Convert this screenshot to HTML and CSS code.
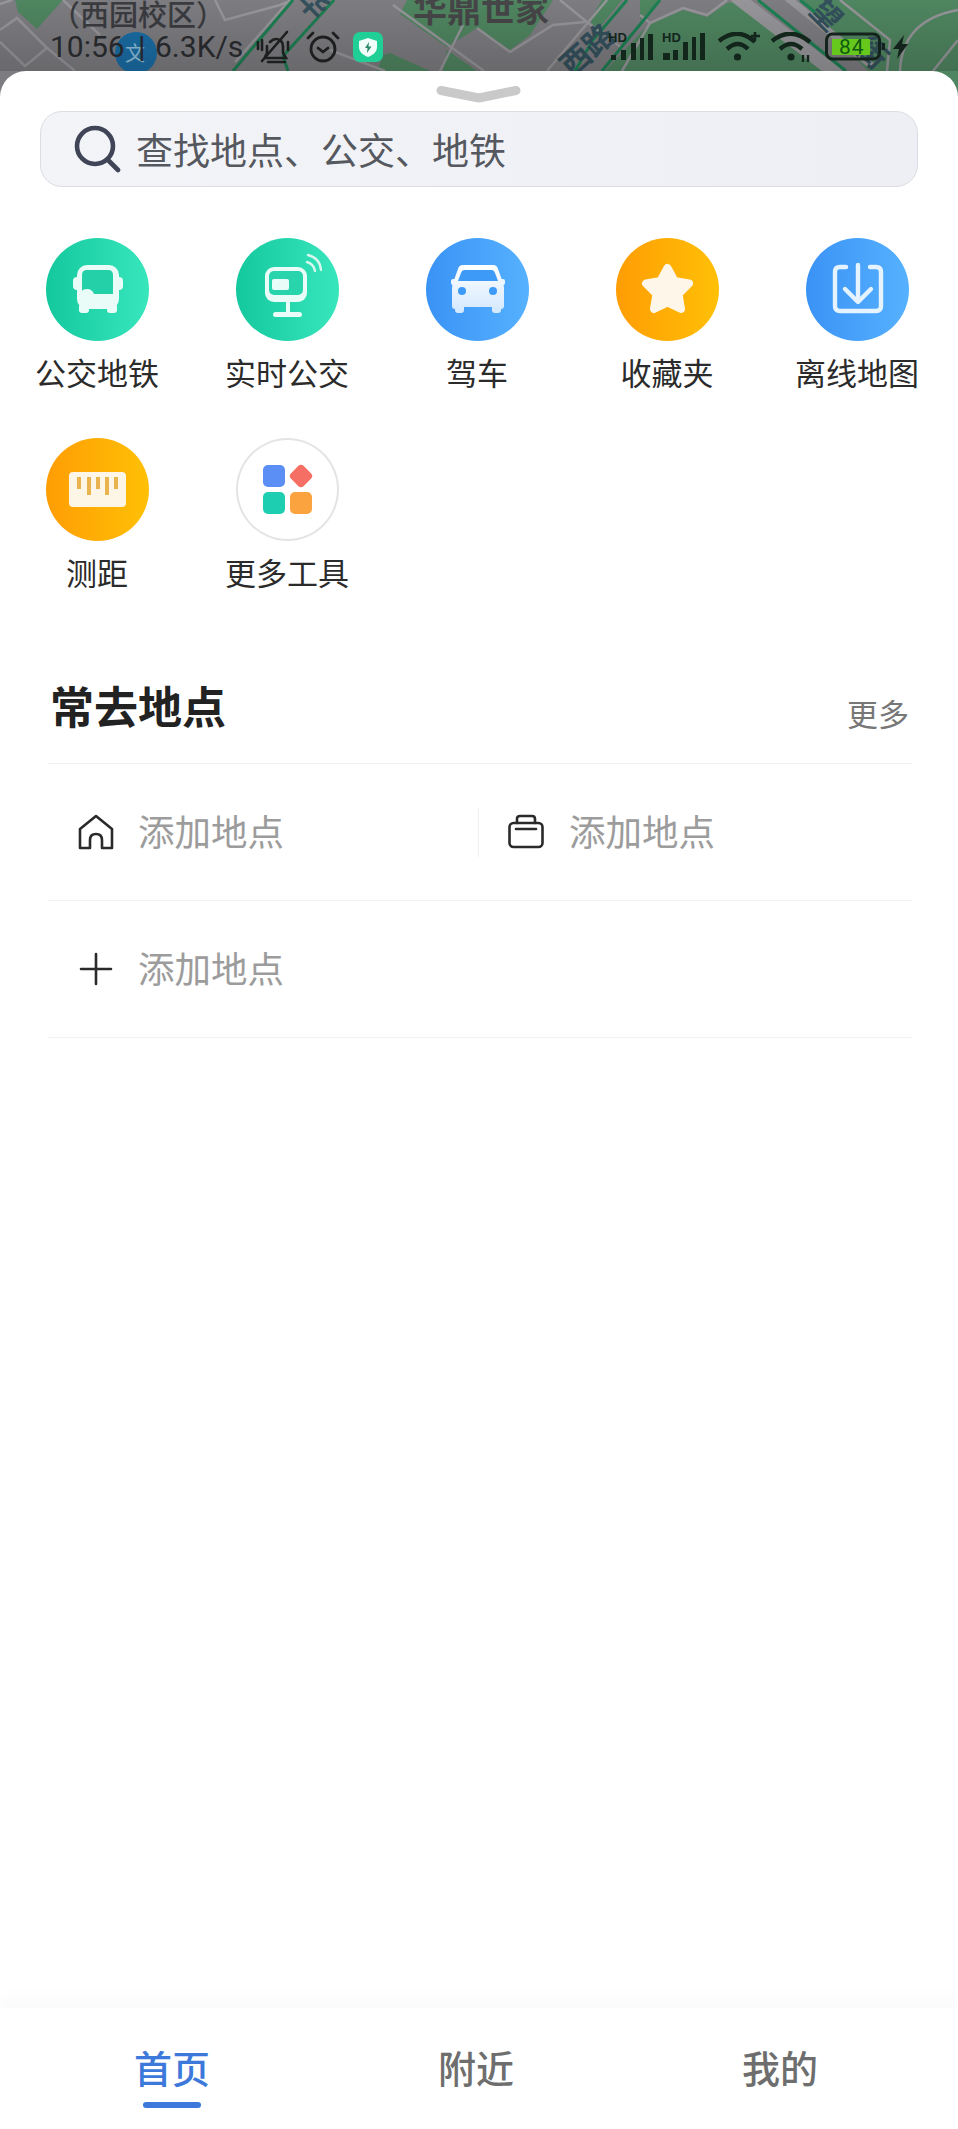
FILE: index.html
```html
<!DOCTYPE html>
<html lang="zh-CN">
<head>
<meta charset="utf-8">
<title>地图</title>
<link rel="stylesheet" href="styles.css">
</head>
<body>
<div class="page">
  <svg class="map" viewBox="0 0 958 110" width="958" height="110">
    <defs>
      <linearGradient id="dim" x1="0" y1="0" x2="0" y2="1"><stop offset="0" stop-color="#000" stop-opacity="0"/><stop offset="1" stop-color="#000" stop-opacity=".16"/></linearGradient>
    </defs>
    <rect width="958" height="110" fill="#7d7c80"/>
    <g fill="#4f8560">
      <polygon points="15,0 63,0 45,20 37,29 18,12"/>
      <polygon points="407,0 553,0 530,35 510,50 477,28 447,47 400,14"/>
      <polygon points="377,71 383,55 390,53 430,71"/>
      <polygon points="447,50 477,71 443,71"/>
      <polygon points="605,71 648,25 683,10 707,17 727,3 745,0 840,71"/>
      <polygon points="800,0 958,0 958,110 868,71"/>
      <polygon points="602,0 622,0 596,32 590,20"/>
      <polygon points="640,0 660,0 640,20"/>
    </g>
    <g fill="none" stroke="#96969a" stroke-width="2.500">
      <path d="M0 30 L17 18 L47 48 L25 66 L0 42"/>
      <path d="M0 4 L12 0"/>
      <path d="M47 48 L75 71"/>
      <path d="M63 0 L100 35"/>
      <path d="M215 0 L225 20 L280 5 L292 0"/>
      <path d="M290 0 L235 62"/>
      <path d="M393 5 L484 71"/>
      <path d="M463 25 L440 71"/>
      <path d="M477 28 L510 52 L553 25 L585 22"/>
      <path d="M607 0 L547 71"/>
      <path d="M560 0 L587 22 L622 48"/>
      <path d="M640 15 L650 23 L622 71"/>
      <path d="M650 23 L683 8 L707 15 L727 0"/>
      <path d="M840 0 L890 40 L887 71"/>
      <path d="M900 71 Q902 20 958 10"/>
      <path d="M933 71 L958 40"/>
      <path d="M330 50 L385 71"/>
    </g>
    <path d="M735 -4 L838 75" fill="none" stroke="#96969a" stroke-width="13"/>
    <path d="M785 -4 L872 66" fill="none" stroke="#96969a" stroke-width="7"/>
    <g fill="none" stroke="#1c7f52" stroke-width="3">
      <path d="M293 0 L233 71"/>
      <path d="M334 0 L283 56 L288 71"/>
      <path d="M627 0 L593 40 L575 71"/>
      <path d="M660 0 L602 71"/>
      <path d="M758 0 L846 71"/>
      <path d="M800 0 L815 12"/>
    </g>
    <circle cx="136" cy="53" r="21" fill="#1a6da5"/>
    <text class="map-glyph" x="125" y="61">文</text>
    <text class="map-label" x="51" y="26">（西园校区）</text>
    <text class="map-title" x="413" y="22">华鼎世家</text>
    <text class="map-road" transform="translate(295 0) rotate(45)">华</text>
    <text class="map-road" transform="translate(572 78) rotate(-42)">西路</text>
    <text class="map-road" transform="translate(808 12) rotate(45)">望</text>
    <text class="map-road" transform="translate(854 50) rotate(45)">街</text>
    <rect width="958" height="71" fill="url(#dim)"/>
  </svg>

  <div class="statusbar">
    <span class="st-time">10:56</span>
    <span class="st-sep">|</span>
    <span class="st-speed">6.3K/s</span>
    <svg class="st-bell" width="36" height="34" viewBox="0 0 36 34" fill="none" stroke="#1d1f1f" stroke-width="2.600" stroke-linecap="round">
      <path d="M11 28 H31 L28 23 V16 C28 11 24 9 21 9 C19 9 17 10 15 12"/>
      <path d="M12 16 V23 L10 27"/>
      <path d="M13 32 H30"/>
      <path d="M7 31 L32 2"/>
      <path d="M3 12 V19 M7 10 V20 M33 12 V20"/>
    </svg>
    <svg class="st-alarm" width="34" height="34" viewBox="0 0 34 34" fill="none" stroke="#1d1f1f" stroke-width="2.800" stroke-linecap="round" stroke-linejoin="round">
      <circle cx="17" cy="19" r="12"/>
      <path d="M12 18 L17 22 L22 18"/>
      <path d="M2 8 L7 3 M32 8 L27 3"/>
    </svg>
    <svg class="st-shield" width="30" height="30" viewBox="0 0 30 30">
      <rect width="30" height="30" rx="7" fill="#20cf96"/>
      <path d="M15 6 L24 9 V15 C24 20 20 23 15 25 C10 23 6 20 6 15 V9 Z" fill="#f1fdf9"/>
      <path d="M16 10 L12 16 H14.500 L14 21 L18.500 14.500 H15.500 Z" fill="#2a8a6a"/>
    </svg>
    <div class="st-right">
      <svg width="45" height="30" viewBox="0 0 45 30" fill="#13261c">
        <text class="hd" x="0" y="10">HD</text>
        <rect x="3" y="23" width="5" height="5"/><rect x="13" y="18" width="5" height="10"/><rect x="23" y="11" width="5" height="17"/><rect x="32" y="6" width="4" height="22"/><rect x="40" y="2" width="5" height="26"/>
      </svg>
      <svg width="44" height="30" viewBox="0 0 44 30" fill="#13261c">
        <text class="hd" x="0" y="10">HD</text>
        <rect x="1" y="21" width="7" height="7"/><rect x="11" y="18" width="5" height="10"/><rect x="21" y="10" width="5" height="18"/><rect x="30" y="5" width="4" height="23"/><rect x="38" y="1" width="5" height="27"/>
      </svg>
      <svg class="st-wifi1" width="43" height="30" viewBox="0 0 43 30" fill="none" stroke="#13261c" stroke-width="4.400">
        <path d="M1 9 Q20 -6 37 10"/><path d="M9 17 Q20 7 30 17"/>
        <circle cx="19.500" cy="25" r="3.600" fill="#13261c" stroke="none"/>
        <path d="M37 0 V8 M33 4 H42" stroke-width="2.600"/>
      </svg>
      <svg class="st-wifi2" width="44" height="30" viewBox="0 0 44 30" fill="none" stroke="#13261c" stroke-width="4.400">
        <path d="M1 9 Q20 -6 39 10"/><path d="M9 17 Q20 7 31 17"/>
        <circle cx="20" cy="25" r="3.600" fill="#13261c" stroke="none"/>
        <path d="M32 23 V30 M37 23 V30" stroke-width="2.400"/>
      </svg>
      <svg class="st-batt" width="60" height="30" viewBox="0 0 60 30">
        <rect x="1.500" y="2" width="53" height="25" rx="6" fill="none" stroke="#13221a" stroke-width="3"/>
        <rect x="7" y="7" width="38" height="16" fill="#66c81c"/>
        <rect x="57" y="11" width="3" height="7" fill="#13221a"/>
        <text class="batt-num" x="14" y="22">84</text>
      </svg>
      <svg class="st-bolt" width="15" height="24" viewBox="0 0 15 24" fill="#13221a"><path d="M11 0 L0 14 H6 L4 24 L15 9 H9 Z"/></svg>
    </div>
  </div>

  <main class="sheet">
    <svg class="handle" width="90" height="22" viewBox="0 0 90 22" fill="none"><path d="M7 7.500 L45 15 L82 7.500" stroke="#c9c9c9" stroke-width="9" stroke-linecap="round" stroke-linejoin="round"/></svg>

    <div class="search">
      <svg class="search-ic" width="48" height="50" viewBox="0 0 48 50" fill="none" stroke="#3f4456" stroke-width="4.600" stroke-linecap="round"><circle cx="22" cy="22" r="18"/><path d="M35 36 L45 46"/></svg>
      <span>查找地点、公交、地铁</span>
    </div>

    <section class="tools">
      <div class="tool">
        <div class="ic ic-green">
          <svg width="103" height="103" viewBox="0 0 103 103">
            <rect x="27" y="39" width="50" height="13" rx="4" fill="#e9fcf7"/>
            <rect x="31" y="27" width="42" height="44" rx="10" fill="#e9fcf7"/>
            <rect x="33" y="66" width="10" height="9" rx="3" fill="#e9fcf7"/>
            <rect x="61" y="66" width="10" height="9" rx="3" fill="#e9fcf7"/>
            <path d="M36 37 Q36 32 41 32 H62 Q67 32 67 37 V56 H48 Q46 51 41 51 Q37 51 36 53 Z" fill="#24d0a8"/>
          </svg>
        </div>
        <span class="tool-label">公交地铁</span>
      </div>
      <div class="tool">
        <div class="ic ic-green">
          <svg width="103" height="103" viewBox="0 0 103 103">
            <rect x="29" y="29" width="42" height="35" rx="9" fill="#e9fcf7"/>
            <rect x="33" y="33" width="34" height="24" rx="5" fill="#27d4ac"/>
            <rect x="36" y="41" width="17" height="11" rx="2" fill="#e9fcf7"/>
            <rect x="50" y="64" width="4" height="11" fill="#e9fcf7"/>
            <rect x="37" y="74" width="29" height="5" rx="2.500" fill="#e9fcf7"/>
            <path d="M71 24 Q78 26 79 33 M72 17 Q84 20 85 32" fill="none" stroke="#d5f7ee" stroke-width="2.400" stroke-linecap="round"/>
          </svg>
        </div>
        <span class="tool-label">实时公交</span>
      </div>
      <div class="tool">
        <div class="ic ic-blue">
          <svg width="103" height="103" viewBox="0 0 103 103">
            <defs><linearGradient id="car" x1="0" y1="0" x2="0" y2="1"><stop offset="0" stop-color="#fff"/><stop offset="1" stop-color="#d3e8fd"/></linearGradient></defs>
            <path d="M37 27 H67 Q71 27 72 31 L76 42 Q78 46 78 50 V68 Q78 71 75 71 V72 Q75 75 72 75 H69 Q66 75 66 72 V69 H38 V72 Q38 75 35 75 H32 Q29 75 29 72 V71 Q26 71 26 68 V50 Q26 46 28 42 L32 31 Q33 27 37 27 Z" fill="url(#car)"/>
            <rect x="25" y="41" width="5" height="6" rx="2" fill="#eef6ff"/>
            <rect x="74" y="41" width="5" height="6" rx="2" fill="#eef6ff"/>
            <path d="M38 32 H66 Q68 32 69 35 L72 43 H32 L35 35 Q36 32 38 32 Z" fill="#3e9af7"/>
            <circle cx="36" cy="53" r="4" fill="#3e9af7"/>
            <circle cx="67" cy="53" r="4" fill="#3e9af7"/>
          </svg>
        </div>
        <span class="tool-label">驾车</span>
      </div>
      <div class="tool">
        <div class="ic ic-orange">
          <svg width="103" height="103" viewBox="0 0 103 103">
            <path d="M51.500 30 L58.500 43 L73 45.500 L62.500 56 L65 71 L51.500 64.500 L38 71 L40.500 56 L30 45.500 L44.500 43 Z" fill="#fff6ea" stroke="#fff6ea" stroke-width="8" stroke-linejoin="round"/>
          </svg>
        </div>
        <span class="tool-label">收藏夹</span>
      </div>
      <div class="tool">
        <div class="ic ic-blue">
          <svg width="103" height="103" viewBox="0 0 103 103" fill="none" stroke="#e5f3ff" stroke-width="4.400" stroke-linecap="round" stroke-linejoin="round">
            <path d="M40 29 H34 Q29 29 29 34 V68 Q29 73 34 73 H70 Q75 73 75 68 V34 Q75 29 70 29 H64"/>
            <path d="M52 27 V63 M39 51 L52 64 L65 51"/>
          </svg>
        </div>
        <span class="tool-label">离线地图</span>
      </div>
      <div class="tool">
        <div class="ic ic-orange">
          <svg width="103" height="103" viewBox="0 0 103 103">
            <rect x="23" y="34" width="57" height="35" rx="4" fill="#fdf5e6"/>
            <g fill="#e9b44e">
              <rect x="31" y="39" width="4" height="12"/><rect x="41" y="39" width="4" height="18"/><rect x="50" y="39" width="4" height="12"/><rect x="59" y="39" width="4" height="18"/><rect x="68" y="39" width="4" height="12"/>
            </g>
          </svg>
        </div>
        <span class="tool-label">测距</span>
      </div>
      <div class="tool">
        <div class="ic ic-more">
          <svg width="103" height="103" viewBox="0 0 103 103">
            <rect x="27" y="27" width="22" height="22" rx="5" fill="#5b8ff5"/>
            <rect x="56" y="29" width="18" height="18" rx="4" fill="#f56f64" transform="rotate(45 65 38)"/>
            <rect x="27" y="54" width="22" height="22" rx="5" fill="#1dcfb0"/>
            <rect x="54" y="54" width="22" height="22" rx="5" fill="#fba43f"/>
          </svg>
        </div>
        <span class="tool-label">更多工具</span>
      </div>
    </section>

    <section class="places">
      <header class="places-head">
        <h2>常去地点</h2>
        <span class="more">更多</span>
      </header>
      <div class="row">
        <div class="cell cell-home">
          <svg class="row-ic" width="36" height="36" viewBox="0 0 36 36" fill="none" stroke="#2a2a2a" stroke-width="2.600" stroke-linejoin="round" stroke-linecap="round">
            <path d="M18 2 L34 15 V34 H24 V26 Q24 20 18 20 Q12 20 12 26 V34 H2 V15 Z"/>
          </svg>
          <span>添加地点</span>
        </div>
        <div class="cell cell-work">
          <svg class="row-ic" width="36" height="36" viewBox="0 0 36 36" fill="none" stroke="#2a2a2a" stroke-width="2.600" stroke-linejoin="round" stroke-linecap="round">
            <rect x="1.500" y="9" width="33" height="24" rx="4"/>
            <path d="M9 9 V5 Q9 2 12 2 H24 Q27 2 27 5 V9"/>
            <path d="M8 15 H28"/>
          </svg>
          <span>添加地点</span>
        </div>
      </div>
      <div class="row">
        <div class="cell cell-home">
          <svg class="row-ic" width="36" height="36" viewBox="0 0 36 36" fill="none" stroke="#2a2a2a" stroke-width="2.600" stroke-linecap="round">
            <path d="M18 3 V33 M3 18 H33"/>
          </svg>
          <span>添加地点</span>
        </div>
      </div>
    </section>

    <nav class="tabbar">
      <div class="tab tab-on"><span>首页</span><i class="tab-bar"></i></div>
      <div class="tab"><span>附近</span></div>
      <div class="tab"><span>我的</span></div>
    </nav>
  </main>
</div>
</body>
</html>
```

FILE: styles.css
```css
* { box-sizing: border-box; }
html, body { margin: 0; padding: 0; background: #fff; }
body { font-family: "Noto Sans CJK SC", "Noto Sans", sans-serif; }
.page { position: relative; width: 958px; height: 2129px; overflow: hidden; }

.map { position: absolute; left: 0; top: 0; display: block; font-family: "Noto Sans CJK SC", sans-serif; }
.map-label { font-size: 29px; font-weight: 500; fill: #3a3b3f; }
.map-title { font-size: 34px; font-weight: 700; fill: #464648; }
.map-road { font-size: 30px; font-weight: 700; fill: #33505c; }
.map-glyph { font-size: 20px; fill: #8fc0dc; }

.statusbar { position: relative; height: 71px; padding: 23px 50px 0; display: flex; align-items: center; color: #25272a; font-family: Roboto, sans-serif; font-size: 30px; line-height: 48px; }
.st-time { width: 75px; }
.st-sep { margin-left: 13px; width: 17px; font-weight: 500; }
.st-speed { width: 90px; }
.st-bell { margin-left: 10px; }
.st-alarm { margin-left: 15px; }
.st-shield { margin-left: 13px; }
.st-right { margin-left: auto; display: flex; align-items: center; gap: 9px; }
.st-wifi1 { margin-left: 3px; }
.st-wifi2 { margin-left: 1px; }
.st-batt { margin-left: 1px; }
.st-bolt { margin-left: -1px; }
.hd { font: 700 13px "Liberation Sans", sans-serif; }
.batt-num { font: 400 21px Roboto, sans-serif; letter-spacing: 1px; fill: #0f5a10; }

.sheet { position: relative; height: 2058px; background: #fff; border-radius: 26px 26px 0 0; padding-top: 12px; display: flex; flex-direction: column; }
.handle { display: block; flex: none; align-self: center; }
.search { flex: none; margin: 6px 40px 0; height: 76px; border: 1.500px solid #dcdde2; border-radius: 22px; background: linear-gradient(90deg, #f3f4f8, #eeeff4); display: flex; align-items: center; padding-left: 32px; color: #55585f; font-size: 37px; }
.search-ic { margin-right: 15px; flex: none; }

.tools { flex: none; margin-top: 51px; padding-left: 2px; display: grid; grid-template-columns: repeat(5, 190px); grid-auto-rows: 200px; }
.tool { display: flex; flex-direction: column; align-items: center; }
.ic { width: 103px; height: 103px; border-radius: 50%; flex: none; }
.ic svg { display: block; }
.ic-green { background: linear-gradient(90deg, #14c89e, #38e6bc); }
.ic-blue { background: linear-gradient(90deg, #3a93f5, #56b1ff); }
.ic-orange { background: linear-gradient(90deg, #ff9d05, #ffc005); }
.ic-more { background: #fff; box-shadow: inset 0 0 0 2px #e4e4e4; }
.tool-label { margin-top: 11px; font-size: 31px; line-height: 40px; color: #2b2b2b; white-space: nowrap; }

.places { flex: none; margin: 0 46px 0 48px; }
.places-head { height: 126px; padding: 36px 3px 28px 2px; border-bottom: 1px solid #f2f2f2; display: flex; justify-content: space-between; align-items: flex-end; }
.places-head h2 { margin: 0; font-size: 44px; line-height: 60px; font-weight: 700; color: #222; }
.more { font-size: 31px; line-height: 40px; color: #777; margin-bottom: 2px; }
.row { height: 137px; border-bottom: 1px solid #f3f3f3; display: flex; align-items: center; font-size: 36.500px; color: #9c9c9c; }
.cell { height: 49px; display: flex; align-items: center; }
.cell span { margin-top: -3px; }
.cell-home { width: 430px; padding-left: 30px; gap: 24px; }
.cell-work { border-left: 1px solid #efefef; padding-left: 29px; gap: 25px; }
.row-ic { flex: none; display: block; }

.tabbar { margin-top: auto; flex: none; height: 121px; padding: 34px 24px 0 20px; display: grid; grid-template-columns: repeat(3, 304px); box-shadow: 0 -10px 18px rgba(0, 0, 0, .025); background: #fff; }
.tab { display: flex; flex-direction: column; align-items: center; font-size: 38px; line-height: 50px; font-weight: 500; color: #6e6e6e; }
.tab-on { color: #3c79da; }
.tab-bar { display: block; width: 58px; height: 6px; margin-top: 10px; border-radius: 3px; background: #3c79da; }
```
